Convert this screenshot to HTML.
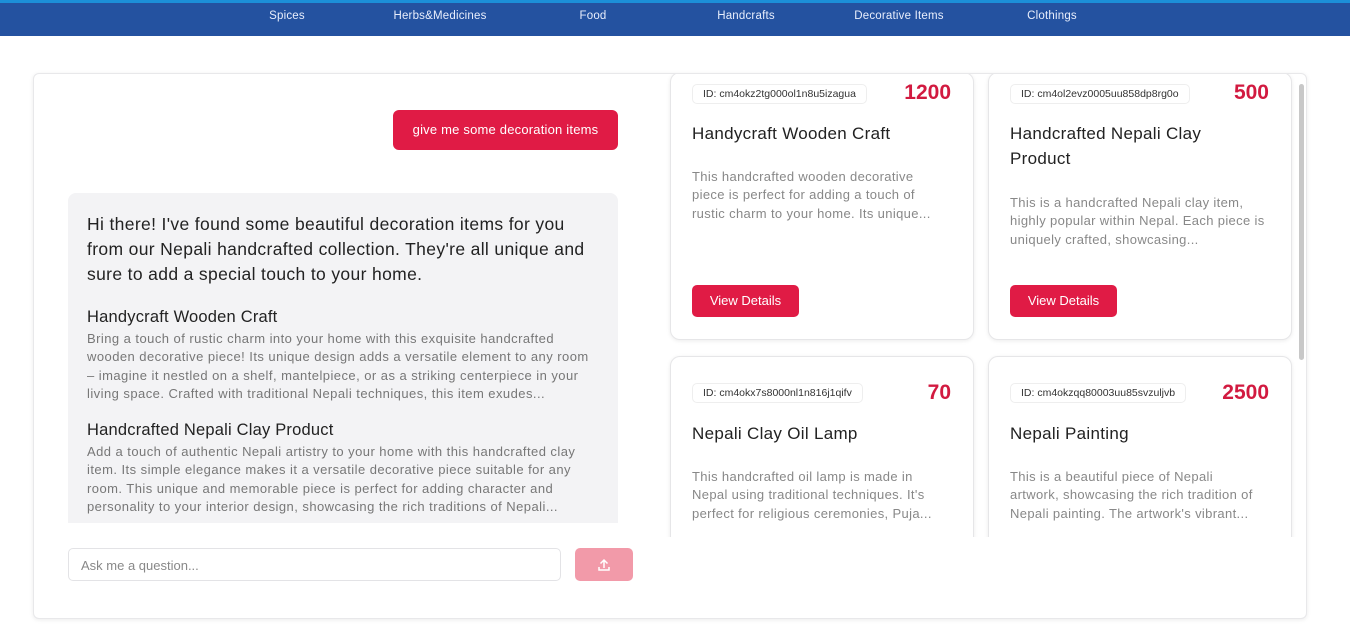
<!DOCTYPE html>
<html><head><meta charset="utf-8"><style>
*{box-sizing:border-box;margin:0;padding:0}
body{width:1350px;height:632px;overflow:hidden;background:#fff;font-family:"Liberation Sans",sans-serif;position:relative}
.nav{position:absolute;left:0;top:0;width:1350px;height:36px;background:#2452a0;border-top:3px solid #1c8fd8}
.nav span{position:absolute;top:7px;color:#e8eefc;font-size:11.5px;transform:translateX(-50%);letter-spacing:.2px}
.main{position:absolute;left:33px;top:73px;width:1274px;height:546px;border:1px solid #e8e8ea;border-radius:6px;box-shadow:0 1px 4px rgba(0,0,0,.08);background:#fff}
.ub{position:absolute;left:393px;top:110px;width:225px;height:40px;background:#e01b45;border-radius:6px;color:#fff;font-size:13px;text-align:center;line-height:40px;letter-spacing:.2px}
.ab{position:absolute;left:68px;top:193px;width:550px;height:330px;background:#f3f3f5;border-radius:8px 8px 0 0;padding:19px 19px;overflow:hidden;color:#222}
.ab .intro{font-size:17.5px;line-height:25px;margin-bottom:21px;letter-spacing:.35px;padding-right:8px}
.ab h4{font-weight:normal;font-size:16.5px;margin-bottom:3px;letter-spacing:.2px}
.ab p{font-size:13px;line-height:18.3px;color:#777;margin-bottom:18px;letter-spacing:.45px}
.inp{position:absolute;left:68px;top:548px;width:493px;height:33px;border:1px solid #e3e3e6;border-radius:5px;font-size:13px;color:#888;padding:9px 12px}
.send{position:absolute;left:575px;top:548px;width:58px;height:33px;background:#f29aa9;border-radius:5px}
.scroll{position:absolute;left:660px;top:74px;width:646px;height:463px;overflow:hidden}
.card{position:absolute;width:304px;height:268px;border:1px solid #e6e6e8;border-radius:10px;box-shadow:0 1px 4px rgba(0,0,0,.08);background:#fff}
.id{position:absolute;left:21px;top:11px;height:20px;border:1px solid #eee;border-radius:5px;font-size:10.5px;padding:3px 10px;color:#333;white-space:nowrap}
.pr{position:absolute;right:22px;top:8px;font-size:21px;font-weight:bold;color:#d21a40}
.t{position:absolute;left:21px;top:50px;width:240px;font-size:17px;line-height:25px;color:#222;letter-spacing:.3px}
.d{position:absolute;left:21px;width:255px;font-size:13px;line-height:18.3px;color:#888;letter-spacing:.35px}
.vb{position:absolute;left:21px;top:212px;width:107px;height:32px;background:#e01b45;border-radius:5px;color:#fff;font-size:13px;text-align:center;line-height:32px}
.sb{position:absolute;left:1299px;top:84px;width:5px;height:276px;background:#c8c8c8;border-radius:3px}
</style></head><body>
<div class="nav"><span style="left:287px">Spices</span><span style="left:440px">Herbs&amp;Medicines</span><span style="left:593px">Food</span><span style="left:746px">Handcrafts</span><span style="left:899px">Decorative Items</span><span style="left:1052px">Clothings</span></div>
<div class="main"></div>
<div class="ub">give me some decoration items</div>
<div class="ab"><div class="intro">Hi there! I've found some beautiful decoration items for you from our Nepali handcrafted collection. They're all unique and sure to add a special touch to your home.</div>
<h4>Handycraft Wooden Craft</h4><p>Bring a touch of rustic charm into your home with this exquisite handcrafted wooden decorative piece! Its unique design adds a versatile element to any room – imagine it nestled on a shelf, mantelpiece, or as a striking centerpiece in your living space. Crafted with traditional Nepali techniques, this item exudes...</p>
<h4>Handcrafted Nepali Clay Product</h4><p>Add a touch of authentic Nepali artistry to your home with this handcrafted clay item. Its simple elegance makes it a versatile decorative piece suitable for any room. This unique and memorable piece is perfect for adding character and personality to your interior design, showcasing the rich traditions of Nepali...</p></div>
<div class="inp">Ask me a question...</div>
<div class="send"><svg width="58" height="33" viewBox="0 0 58 33"><path d="M29 20V12M25.5 15.5L29 12l3.5 3.5M24 19v3h10v-3" stroke="#fff" stroke-width="1.5" fill="none"/></svg></div>
<div class="scroll">
<div class="card" style="left:10px;top:-2px"><div class="id">ID: cm4okz2tg000ol1n8u5izagua</div><div class="pr">1200</div><div class="t" style="top:48px">Handycraft Wooden Craft</div><div class="d" style="top:95px">This handcrafted wooden decorative piece is perfect for adding a touch of rustic charm to your home. Its unique...</div><div class="vb">View Details</div></div>
<div class="card" style="left:328px;top:-2px"><div class="id">ID: cm4ol2evz0005uu858dp8rg0o</div><div class="pr">500</div><div class="t" style="top:48px">Handcrafted Nepali Clay Product</div><div class="d" style="top:121px">This is a handcrafted Nepali clay item, highly popular within Nepal. Each piece is uniquely crafted, showcasing...</div><div class="vb">View Details</div></div>
<div class="card" style="left:10px;top:282px"><div class="id" style="top:26px">ID: cm4okx7s8000nl1n816j1qifv</div><div class="pr" style="top:24px">70</div><div class="t" style="top:64px">Nepali Clay Oil Lamp</div><div class="d" style="top:111px">This handcrafted oil lamp is made in Nepal using traditional techniques. It's perfect for religious ceremonies, Puja...</div></div>
<div class="card" style="left:328px;top:282px"><div class="id" style="top:26px">ID: cm4okzqq80003uu85svzuljvb</div><div class="pr" style="top:24px">2500</div><div class="t" style="top:64px">Nepali Painting</div><div class="d" style="top:111px">This is a beautiful piece of Nepali artwork, showcasing the rich tradition of Nepali painting. The artwork's vibrant...</div></div>
</div>
<div class="sb"></div>
</body></html>
